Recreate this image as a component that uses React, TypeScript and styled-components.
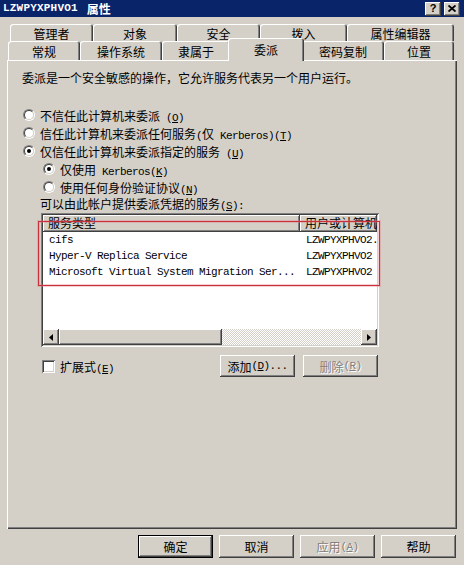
import React from "react";
import styled, { createGlobalStyle } from "styled-components";

const FACE = "#d4d0c8";
const CJK = `"Noto Sans CJK SC", "Noto Sans CJK JP", sans-serif`;
const MONO = `"Liberation Mono", "DejaVu Sans Mono", monospace`;

const Global = createGlobalStyle`
  html, body { margin: 0; padding: 0; background: ${FACE}; }
  body { font-family: ${CJK}; font-size: 12px; color: #000; }
`;

const raised = `box-shadow: inset -1px -1px #404040, inset 1px 1px #fff, inset -2px -2px #808080, inset 2px 2px ${FACE};`;
const sunken = `box-shadow: inset 1px 1px #808080, inset -1px -1px #fff, inset 2px 2px #404040, inset -2px -2px ${FACE};`;

const Window = styled.div`
  width: 464px;
  height: 565px;
  background: ${FACE};
  display: flex;
  flex-direction: column;
  font-family: ${CJK};
  font-size: 12px;
  color: #000;
  overflow: hidden;
`;

const TitleBar = styled.div`
  height: 17px;
  flex: none;
  background: #0a246a;
  display: flex;
  align-items: center;
  justify-content: space-between;
  padding: 0 4px 0 3px;
  color: #fff;
  font-weight: bold;
`;

const TitleText = styled.div`
  display: flex;
  align-items: center;
  gap: 9px;
  line-height: 17px;
`;

const TitleLatin = styled.span`
  font-family: ${MONO};
  font-size: 11px;
  font-weight: bold;
  letter-spacing: 0.2px;
`;

const TitleButtons = styled.div`
  display: flex;
  gap: 3px;
  align-items: center;
`;

const CaptionButton = styled.div`
  width: 16px;
  height: 14px;
  background: ${FACE};
  ${raised}
  display: flex;
  align-items: center;
  justify-content: center;
  color: #000;
  font-family: "Liberation Sans", sans-serif;
  font-weight: bold;
  font-size: 11px;
  line-height: 14px;
  padding-bottom: 1px;
  box-sizing: border-box;
`;

const Body = styled.div`
  flex: 1;
  display: flex;
  flex-direction: column;
  padding: 7px 7px 0 7px;
`;

const TabStrip = styled.div`
  height: 36px;
  display: flex;
  flex-direction: column;
`;

const TabRow = styled.div<{ $h: number; $indent: number }>`
  height: ${(p) => p.$h}px;
  padding-left: ${(p) => p.$indent}px;
  display: flex;
  align-items: flex-end;
`;

const Tab = styled.div<{ $w: number; $h: number; $pt: number; $active?: boolean }>`
  width: ${(p) => p.$w}px;
  height: ${(p) => p.$h}px;
  flex: none;
  box-sizing: border-box;
  padding-top: ${(p) => p.$pt}px;
  background: ${FACE};
  border-radius: 3px 3px 0 0;
  box-shadow: inset 1px 1px #fff, inset -1px 0 #404040, inset -2px 0 #808080;
  display: flex;
  align-items: center;
  justify-content: center;
  line-height: 14px;
  white-space: nowrap;
  ${(p) =>
    p.$active &&
    `
    margin: 0 -2px -1px -2px;
    position: relative;
    z-index: 2;
  `}
`;

const Panel = styled.div`
  height: 469px;
  box-sizing: border-box;
  padding: 10px 0 0 15px;
  box-shadow: inset 1px 1px #fff, inset -1px -1px #404040, inset -2px -2px #808080;
  display: flex;
  flex-direction: column;
  align-items: flex-start;
`;

const Description = styled.div`
  height: 16px;
  line-height: 16px;
  white-space: nowrap;
`;

const RadioGroup = styled.div`
  margin-top: 20px;
  display: flex;
  flex-direction: column;
`;

const OptionRow = styled.label<{ $indent: number }>`
  height: 18px;
  display: flex;
  align-items: center;
  gap: 5px;
  padding-left: ${(p) => p.$indent}px;
  white-space: nowrap;
`;

const RadioDot = styled.span<{ $checked?: boolean }>`
  width: 12px;
  height: 12px;
  flex: none;
  box-sizing: border-box;
  border-radius: 50%;
  border: 1px solid;
  border-color: #808080 #fff #fff #808080;
  position: relative;
  &::before {
    content: "";
    position: absolute;
    inset: 0;
    border-radius: 50%;
    border: 1px solid;
    border-color: #404040 ${FACE} ${FACE} #404040;
    background: #fff;
  }
  &::after {
    content: "";
    position: absolute;
    left: 3px;
    top: 3px;
    width: 4px;
    height: 4px;
    border-radius: 50%;
    background: ${(p) => (p.$checked ? "#000" : "transparent")};
  }
`;

const Lat = styled.span`
  font-family: ${MONO};
  font-size: 11px;
  letter-spacing: -0.6px;
`;

const FieldLabel = styled.div`
  height: 16px;
  line-height: 16px;
  padding-left: 18px;
  white-space: nowrap;
`;

const ServicesBlock = styled.div`
  margin: 1px 0 0 19px;
  width: 338px;
  display: flex;
  flex-direction: column;
`;

const ListWrap = styled.div`
  position: relative;
  height: 134px;
`;

const ListBox = styled.div`
  height: 100%;
  box-sizing: border-box;
  padding: 2px;
  background: #fff;
  ${sunken}
  display: flex;
  flex-direction: column;
  overflow: hidden;
`;

const HeaderRow = styled.div`
  height: 17px;
  flex: none;
  display: flex;
`;

const HeaderCell = styled.div<{ $w?: number }>`
  ${(p) => (p.$w ? `width: ${p.$w}px; flex: none;` : "flex: 1;")}
  background: ${FACE};
  box-shadow: inset -1px -1px #404040, inset 1px 1px #fff, inset -2px -2px #808080;
  box-sizing: border-box;
  padding-left: 5px;
  line-height: 16px;
  white-space: nowrap;
  overflow: hidden;
`;

const Rows = styled.div`
  flex: 1;
  display: flex;
  flex-direction: column;
`;

const Row = styled.div`
  height: 16px;
  display: flex;
  align-items: center;
  font-family: ${MONO};
  font-size: 11px;
  letter-spacing: -0.6px;
  white-space: nowrap;
`;

const Cell = styled.div<{ $w?: number }>`
  ${(p) => (p.$w ? `width: ${p.$w}px; flex: none;` : "flex: 1;")}
  padding-left: 6px;
  box-sizing: border-box;
  overflow: hidden;
`;

const Scrollbar = styled.div`
  height: 16px;
  flex: none;
  display: flex;
`;

const ScrollButton = styled.div`
  width: 16px;
  height: 16px;
  flex: none;
  background: ${FACE};
  ${raised}
  display: flex;
  align-items: center;
  justify-content: center;
`;

const Thumb = styled.div`
  width: 163px;
  height: 16px;
  flex: none;
  background: ${FACE};
  ${raised}
`;

const Track = styled.div`
  flex: 1;
  background: repeating-conic-gradient(#fff 0 25%, ${FACE} 0 50%) 0 0 / 2px 2px;
`;

const Highlight = styled.div`
  position: absolute;
  left: -3px;
  top: 8px;
  width: 342px;
  height: 65px;
  box-sizing: border-box;
  border: 1px solid #c8303c;
  box-shadow: 0 0 0 1px rgba(230, 120, 130, 0.35), inset 0 0 0 1px rgba(230, 120, 130, 0.35);
  pointer-events: none;
`;

const ActionRow = styled.div`
  margin-top: 8px;
  height: 22px;
  display: flex;
  align-items: center;
  padding: 0 1px 0 1px;
`;

const CheckBox = styled.span`
  width: 13px;
  height: 13px;
  flex: none;
  background: #fff;
  ${sunken}
`;

const CheckLabel = styled.label`
  display: flex;
  align-items: center;
  gap: 5px;
  white-space: nowrap;
  margin-right: auto;
`;

const Button = styled.button<{ $default?: boolean; $h?: number }>`
  width: 75px;
  height: ${(p) => p.$h ?? 22}px;
  flex: none;
  border: none;
  padding: 0;
  background: ${FACE};
  font-family: ${CJK};
  font-size: 12px;
  color: #000;
  display: flex;
  align-items: center;
  justify-content: center;
  ${(p) =>
    p.$default
      ? `box-shadow: inset 0 0 0 1px #000, inset -2px -2px #404040, inset 2px 2px #fff, inset -3px -3px #808080;`
      : raised}
  &:disabled {
    color: #808080;
    text-shadow: 1px 1px #fff;
  }
`;

const ButtonGap = styled.div`
  width: 8px;
  flex: none;
`;

const Footer = styled.div`
  margin-top: 6px;
  display: flex;
  justify-content: flex-end;
  gap: 6px;
  padding-right: 1px;
`;

const backTabs = [
  { label: "管理者", w: 83 },
  { label: "对象", w: 84 },
  { label: "安全", w: 83 },
  { label: "拨入", w: 87 },
  { label: "属性编辑器", w: 107 },
];

const frontTabs = [
  { label: "常规", w: 72 },
  { label: "操作系统", w: 82 },
  { label: "隶属于", w: 68 },
  { label: "委派", w: 76, active: true },
  { label: "密码复制", w: 82 },
  { label: "位置", w: 70 },
];

const services = [
  { type: "cifs", host: "LZWPYXPHVO2." },
  { type: "Hyper-V Replica Service", host: "LZWPYXPHVO2" },
  { type: "Microsoft Virtual System Migration Ser...", host: "LZWPYXPHVO2" },
];

const Arrow = ({ dir }: { dir: "left" | "right" }) => (
  <svg width="4" height="7" viewBox="0 0 4 7">
    {dir === "left" ? <path d="M4 0 L0 3.5 L4 7 Z" fill="#000" /> : <path d="M0 0 L4 3.5 L0 7 Z" fill="#000" />}
  </svg>
);

export default function App() {
  return (
    <>
      <Global />
      <Window>
        <TitleBar>
          <TitleText>
            <TitleLatin>LZWPYXPHVO1</TitleLatin>
            <span>属性</span>
          </TitleText>
          <TitleButtons>
            <CaptionButton>?</CaptionButton>
            <CaptionButton>
              <svg width="8" height="7" viewBox="0 0 8 7">
                <path d="M0.5 0.5 L7.5 6.5 M7.5 0.5 L0.5 6.5" stroke="#000" strokeWidth="1.8" />
              </svg>
            </CaptionButton>
          </TitleButtons>
        </TitleBar>
        <Body>
          <TabStrip>
            <TabRow $h={17} $indent={3}>
              {backTabs.map((t) => (
                <Tab key={t.label} $w={t.w} $h={17} $pt={2}>
                  {t.label}
                </Tab>
              ))}
            </TabRow>
            <TabRow $h={19} $indent={1}>
              {frontTabs.map((t) => (
                <Tab key={t.label} $w={t.w} $h={t.active ? 23 : 19} $pt={t.active ? 1 : 3} $active={t.active}>
                  {t.label}
                </Tab>
              ))}
            </TabRow>
          </TabStrip>
          <Panel>
            <Description>委派是一个安全敏感的操作，它允许服务代表另一个用户运行。</Description>
            <RadioGroup>
              <OptionRow $indent={1}>
                <RadioDot />
                <span>
                  不信任此计算机来委派<Lat> (<u>O</u>)</Lat>
                </span>
              </OptionRow>
              <OptionRow $indent={1}>
                <RadioDot />
                <span>
                  信任此计算机来委派任何服务<Lat>(</Lat>仅<Lat> Kerberos)(<u>T</u>)</Lat>
                </span>
              </OptionRow>
              <OptionRow $indent={1}>
                <RadioDot $checked />
                <span>
                  仅信任此计算机来委派指定的服务<Lat> (<u>U</u>)</Lat>
                </span>
              </OptionRow>
              <OptionRow $indent={21}>
                <RadioDot $checked />
                <span>
                  仅使用<Lat> Kerberos(<u>K</u>)</Lat>
                </span>
              </OptionRow>
              <OptionRow $indent={21}>
                <RadioDot />
                <span>
                  使用任何身份验证协议<Lat>(<u>N</u>)</Lat>
                </span>
              </OptionRow>
            </RadioGroup>
            <FieldLabel>
              可以由此帐户提供委派凭据的服务<Lat>(<u>S</u>):</Lat>
            </FieldLabel>
            <ServicesBlock>
              <ListWrap>
                <ListBox>
                  <HeaderRow>
                    <HeaderCell $w={257}>服务类型</HeaderCell>
                    <HeaderCell>用户或计算机</HeaderCell>
                  </HeaderRow>
                  <Rows>
                    {services.map((s) => (
                      <Row key={s.type}>
                        <Cell $w={257}>{s.type}</Cell>
                        <Cell>{s.host}</Cell>
                      </Row>
                    ))}
                  </Rows>
                  <Scrollbar>
                    <ScrollButton>
                      <Arrow dir="left" />
                    </ScrollButton>
                    <Thumb />
                    <Track />
                    <ScrollButton>
                      <Arrow dir="right" />
                    </ScrollButton>
                  </Scrollbar>
                </ListBox>
                <Highlight />
              </ListWrap>
              <ActionRow>
                <CheckLabel>
                  <CheckBox />
                  <span>
                    扩展式<Lat>(<u>E</u>)</Lat>
                  </span>
                </CheckLabel>
                <Button>
                  添加<Lat>(<u>D</u>)...</Lat>
                </Button>
                <ButtonGap />
                <Button disabled>
                  删除<Lat>(<u>R</u>)</Lat>
                </Button>
              </ActionRow>
            </ServicesBlock>
          </Panel>
          <Footer>
            <Button $default $h={23}>确定</Button>
            <Button $h={23}>取消</Button>
            <Button $h={23} disabled>
              应用<Lat>(<u>A</u>)</Lat>
            </Button>
            <Button $h={23}>帮助</Button>
          </Footer>
        </Body>
      </Window>
    </>
  );
}
